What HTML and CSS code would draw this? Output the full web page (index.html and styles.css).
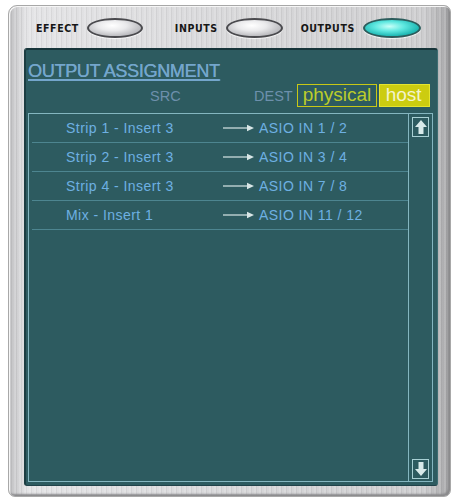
FILE: index.html
```html
<!DOCTYPE html>
<html>
<head>
<meta charset="utf-8">
<link rel="stylesheet" href="styles.css">
</head>
<body>
<div class="frame">
  <div class="topbar">
    <div class="tab"><span class="tab-label">EFFECT</span><span class="pill"></span></div>
    <div class="tab"><span class="tab-label">INPUTS</span><span class="pill"></span></div>
    <div class="tab"><span class="tab-label">OUTPUTS</span><span class="pill pill-on"></span></div>
  </div>
  <div class="panel">
    <div class="title">OUTPUT ASSIGNMENT</div>
    <div class="head">
      <span class="src">SRC</span>
      <span class="dest">DEST</span>
      <span class="opt opt-physical">physical</span>
      <span class="opt opt-host">host</span>
    </div>
    <div class="list">
      <div class="rows">
        <div class="row"><span class="from">Strip 1 - Insert 3</span><svg class="arrow" width="31" height="8" viewBox="0 0 31 8"><line x1="0" y1="4" x2="25" y2="4" stroke="#d8e6e6" stroke-width="1.2"/><path d="M24 0.8 L31 4 L24 7.2 Z" fill="#d8e6e6"/></svg><span class="to">ASIO IN 1 / 2</span></div>
        <div class="row"><span class="from">Strip 2 - Insert 3</span><svg class="arrow" width="31" height="8" viewBox="0 0 31 8"><line x1="0" y1="4" x2="25" y2="4" stroke="#d8e6e6" stroke-width="1.2"/><path d="M24 0.8 L31 4 L24 7.2 Z" fill="#d8e6e6"/></svg><span class="to">ASIO IN 3 / 4</span></div>
        <div class="row"><span class="from">Strip 4 - Insert 3</span><svg class="arrow" width="31" height="8" viewBox="0 0 31 8"><line x1="0" y1="4" x2="25" y2="4" stroke="#d8e6e6" stroke-width="1.2"/><path d="M24 0.8 L31 4 L24 7.2 Z" fill="#d8e6e6"/></svg><span class="to">ASIO IN 7 / 8</span></div>
        <div class="row"><span class="from">Mix - Insert 1</span><svg class="arrow" width="31" height="8" viewBox="0 0 31 8"><line x1="0" y1="4" x2="25" y2="4" stroke="#d8e6e6" stroke-width="1.2"/><path d="M24 0.8 L31 4 L24 7.2 Z" fill="#d8e6e6"/></svg><span class="to">ASIO IN 11 / 12</span></div>
      </div>
      <div class="scroll">
        <div class="sbtn"><svg width="14" height="16" viewBox="0 0 14 16"><path d="M7 1 L13 8 L9.5 8 L9.5 15 L4.5 15 L4.5 8 L1 8 Z" fill="#d8eaea"/></svg></div>
        <div class="sbtn"><svg width="14" height="16" viewBox="0 0 14 16"><path d="M7 15 L13 8 L9.5 8 L9.5 1 L4.5 1 L4.5 8 L1 8 Z" fill="#d8eaea"/></svg></div>
      </div>
    </div>
  </div>
</div>
</body>
</html>
```

FILE: styles.css
```css
html, body {
  margin: 0;
  padding: 0;
  background: #ffffff;
}
body {
  font-family: "Liberation Sans", Arial, sans-serif;
}
.frame {
  box-sizing: border-box;
  margin: 5px 0 0 8px;
  width: 443px;
  height: 492px;
  border-radius: 9px 7px 7px 7px;
  border: 1px solid #a8a8a8;
  background:
    repeating-linear-gradient(90deg, rgba(255,255,255,0.14) 0 2px, rgba(0,0,0,0.05) 2px 3px, rgba(255,255,255,0) 3px 5px),
    linear-gradient(90deg, #c0c0c2 0%, #e4e4e6 4%, #d8d8da 50%, #cdcdcf 94%, #a4a4a6 100%);
  box-shadow: inset 1px 1px 0 #f6f6f6, inset -2px -2px 2px #8a8a8c;
  padding: 0 12px 0 15px;
  display: flex;
  flex-direction: column;
}
.topbar {
  height: 42px;
  display: flex;
  align-items: center;
  padding: 2px 0 0 12px;
  box-sizing: border-box;
  flex-shrink: 0;
}
.tab {
  display: flex;
  align-items: center;
}
.tab:nth-child(1) { margin-right: 32px; }
.tab:nth-child(2) { margin-right: 18px; }
.tab-label {
  font-family: "DejaVu Sans Condensed", "DejaVu Sans", sans-serif;
  font-weight: bold;
  font-size: 10.5px;
  letter-spacing: 0.6px;
  color: #161616;
  margin-right: 8px;
}
.pill {
  display: block;
  width: 56px;
  height: 20px;
  border-radius: 50%;
  border: 2px solid #4a4a4e;
  box-sizing: border-box;
  background: radial-gradient(ellipse at 45% 35%, #ffffff 0%, #eaeaec 35%, #b8b8bc 75%, #8e8e94 100%);
  box-shadow: 0 1px 1px rgba(255,255,255,0.8);
}
.tab:nth-child(2) .pill { width: 57px; }
.pill-on {
  width: 58px;
  border-color: #2c5c5c;
  background: radial-gradient(ellipse at 45% 40%, #c8fff8 0%, #5ee8e0 35%, #1fb8b4 70%, #137a7c 100%);
}
.panel {
  box-sizing: border-box;
  height: 438px;
  background: #2d5b60;
  border-top: 2px solid #17353a;
  border-left: 2px solid #1c3d42;
  border-right: 1px solid #3d6d72;
  border-bottom: 1px solid #20434a;
  border-radius: 3px;
  display: flex;
  flex-direction: column;
  padding: 0 4px 3px 1px;
}
.title {
  margin: 11px 0 0 1px;
  font-size: 18px;
  letter-spacing: -0.3px;
  color: #74a6cc;
  text-decoration: underline;
  text-underline-offset: 2px;
  text-decoration-thickness: 2px;
  text-shadow: 0.3px 0 0 #74a6cc;
  line-height: 20px;
  height: 20px;
}
.head {
  display: flex;
  align-items: center;
  height: 23px;
  margin-top: 3px;
}
.src {
  margin-left: 123px;
  font-size: 14.5px;
  color: #6d90ac;
  width: 104px;
}
.dest {
  font-size: 14.5px;
  color: #6d90ac;
  margin-right: 4px;
}
.opt {
  box-sizing: border-box;
  height: 23px;
  line-height: 20px;
  font-size: 19px;
  border: 1.5px solid #c8c816;
  padding: 0 0 0 4px;
  white-space: nowrap;
  flex-shrink: 0;
}
.opt-physical {
  width: 80px;
  color: #bccc2a;
  margin-right: 2px;
  padding-left: 5px;
}
.opt-host {
  width: 51px;
  background: #cccc10;
  color: #f4f4cc;
  border-color: #e4e430;
  padding-left: 6px;
}
.list {
  flex: 1;
  margin-top: 6px;
  margin-left: 1px;
  border: 1px solid #84b6c0;
  display: flex;
}
.rows {
  flex: 1;
  padding-left: 3px;
}
.row {
  height: 28px;
  border-bottom: 1px solid #4d8590;
  display: flex;
  align-items: center;
  font-size: 14px;
  letter-spacing: 0.45px;
  color: #6db0e2;
}
.from {
  margin-left: 34px;
  width: 157px;
}
.arrow {
  display: block;
  margin-right: 5px;
}
.scroll {
  width: 23px;
  border-left: 1px solid #84b6c0;
  display: flex;
  flex-direction: column;
  justify-content: space-between;
  align-items: center;
  padding: 3px 0 2px;
}
.sbtn {
  width: 17px;
  height: 20px;
  border: 1px solid #a8d0d4;
  box-sizing: border-box;
  display: flex;
  align-items: center;
  justify-content: center;
}
```
